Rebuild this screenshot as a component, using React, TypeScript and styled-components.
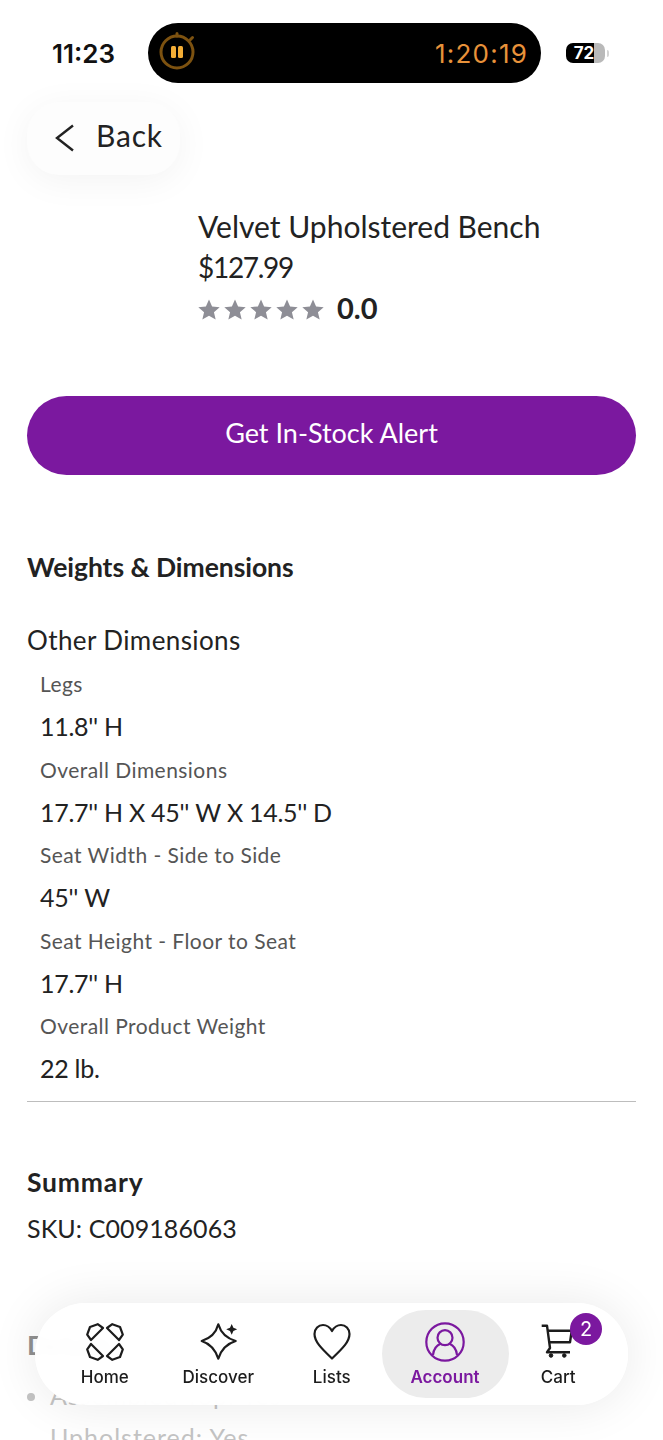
import React, { FC } from 'react';
import styled, { createGlobalStyle } from 'styled-components';

const GlobalStyle = createGlobalStyle`
  html, body {
    margin: 0;
    padding: 0;
    background: #fff;
  }
  * {
    box-sizing: border-box;
  }
`;

const Page = styled.div`
  position: relative;
  width: 663px;
  height: 1440px;
  overflow: hidden;
  background: #fff;
  font-family: Lato, 'Liberation Sans', sans-serif;
  color: #222;
`;

const StatusBar = styled.header`
  display: flex;
  align-items: center;
  height: 60px;
  margin-top: 23px;
  padding-left: 52px;
`;

const Clock = styled.span`
  width: 96px;
  font-family: Inter, sans-serif;
  font-size: 26px;
  font-weight: 600;
  color: #111;
`;

const Island = styled.div`
  display: flex;
  align-items: center;
  justify-content: space-between;
  width: 393px;
  height: 60px;
  padding: 0 13px 0 9px;
  border-radius: 30px;
  background: #000;
`;

const IslandTimer = styled.span`
  font-family: Inter, sans-serif;
  font-size: 26px;
  letter-spacing: 1.2px;
  color: #e8923a;
`;

const Battery = styled.div`
  display: flex;
  align-items: center;
  justify-content: center;
  width: 39px;
  height: 20px;
  margin-left: 25px;
  padding-right: 3px;
  border-radius: 7px;
  background: linear-gradient(90deg, #000 72%, #b9b9b9 72%);
  font-family: Inter, sans-serif;
  font-size: 17px;
  font-weight: 700;
  color: #fff;
`;

const BatteryCap = styled.div`
  width: 2px;
  height: 7px;
  margin-left: 2px;
  border-radius: 0 2px 2px 0;
  background: #d4d4d4;
`;

const BackButton = styled.button`
  display: flex;
  align-items: center;
  gap: 20px;
  width: 153px;
  height: 73px;
  margin: 19px 0 0 27px;
  padding: 0 0 2px 27px;
  border: none;
  border-radius: 32px;
  background: #fdfdfd;
  box-shadow: 0 6px 36px rgba(0, 0, 0, 0.05);
  font-family: inherit;
  font-size: 30px;
  letter-spacing: 0.8px;
  color: #222;
`;

const BackLabel = styled.span`
  margin-bottom: 6px;
`;

const ProductInfo = styled.section`
  display: flex;
  flex-direction: column;
  margin: 30px 0 0 198px;
`;

const ProductTitle = styled.h1`
  margin: 0;
  font-size: 30px;
  line-height: 42px;
  font-weight: 400;
  color: #222;
`;

const ProductPrice = styled.div`
  font-size: 28px;
  line-height: 40px;
  letter-spacing: -1.3px;
  color: #222;
`;

const RatingRow = styled.div`
  display: flex;
  align-items: center;
  height: 42px;
  margin-top: 1px;
`;

const Stars = styled.div`
  display: flex;
  gap: 4px;
  margin-right: 13px;
`;

const RatingValue = styled.span`
  padding-bottom: 3px;
  font-size: 29px;
  font-weight: 700;
  color: #222;
`;

const AlertButton = styled.button`
  display: block;
  width: 609px;
  height: 79px;
  margin: 66px 0 0 27px;
  padding: 0 0 7px;
  border: none;
  border-radius: 40px;
  background: #7b189f;
  font-family: inherit;
  font-size: 27px;
  color: #fff;
`;

const Content = styled.main`
  padding: 0 27px;
`;

const SectionTitle = styled.h2<{ $top: number; $tracking?: number }>`
  margin: ${(p) => p.$top}px 0 0;
  font-size: 26.5px;
  line-height: 36px;
  font-weight: 700;
  letter-spacing: ${(p) => p.$tracking ?? 0}px;
  color: #222;
`;

const SubTitle = styled.h3`
  margin: 37px 0 0;
  font-size: 26px;
  line-height: 36px;
  font-weight: 400;
  letter-spacing: 0.4px;
  color: #222;
`;

const DimensionList = styled.dl`
  margin: 6px 0 0;
  padding: 0 0 9px 13px;
  border-bottom: 1px solid #bdbdbd;
`;

const DimensionLabel = styled.dt`
  font-size: 21px;
  line-height: 40px;
  letter-spacing: 0.45px;
  color: #555;
`;

const DimensionValue = styled.dd`
  margin: 0;
  font-size: 25px;
  line-height: 45.6px;
  font-kerning: none;
  letter-spacing: -0.28px;
  color: #222;
`;

const SkuLine = styled.div`
  margin-top: 9px;
  font-size: 25px;
  line-height: 38px;
  letter-spacing: 0.1px;
  color: #222;
`;

const FadedSection = styled.section`
  margin-top: 80px;
`;

const FadedTitle = styled.h2`
  margin: 0;
  font-size: 27px;
  line-height: 36px;
  font-weight: 700;
  color: #8f8f8f;
`;

const FadedList = styled.ul`
  margin: 12px 0 0;
  padding: 0 0 0 23px;
  font-size: 25px;
  line-height: 40px;
  letter-spacing: 1px;
  color: #c4c4c4;
`;

const FadedItem = styled.li<{ $plain?: boolean }>`
  margin-top: ${(p) => (p.$plain ? '2px' : '0')};
  list-style: ${(p) => (p.$plain ? 'none' : 'disc')};
`;

const TabBar = styled.nav`
  position: absolute;
  left: 35px;
  top: 1303px;
  display: flex;
  align-items: center;
  width: 593px;
  height: 102px;
  padding: 0 11px 0 13px;
  border-radius: 51px;
  background: rgba(255, 255, 255, 0.97);
  backdrop-filter: blur(4px);
  box-shadow: 0 0 50px rgba(0, 0, 0, 0.09);
`;

const Tab = styled.a<{ $active?: boolean }>`
  position: relative;
  display: flex;
  flex-direction: column;
  align-items: center;
  justify-content: flex-end;
  flex: 0 0 ${(p) => (p.$active ? '127px' : '113.5px')};
  height: 88px;
  margin: 0 ${(p) => (p.$active ? '-7px' : '0')};
  padding-bottom: 11px;
  border-radius: 44px;
  background: ${(p) => (p.$active ? '#ececec' : 'transparent')};
  font-family: Inter, sans-serif;
  font-size: 17px;
  font-weight: ${(p) => (p.$active ? 600 : 500)};
  color: ${(p) => (p.$active ? '#7b189f' : '#1c1c1c')};
`;

const TabIcon = styled.svg`
  display: block;
  width: 40px;
  height: 40px;
  margin-bottom: 5px;
`;

const Badge = styled.span`
  position: absolute;
  top: 3px;
  right: 13px;
  display: flex;
  align-items: center;
  justify-content: center;
  width: 32px;
  height: 32px;
  border-radius: 50%;
  background: #7b189f;
  font-size: 20px;
  font-weight: 400;
  color: #fff;
`;

const Star: FC = () => (
  <svg width="22" height="21" viewBox="0 0 24 23">
    <path d="M12 0.5l3.4 7.6 8.3.8-6.3 5.5 1.9 8.1L12 18.3l-7.3 4.2 1.9-8.1L.3 8.9l8.3-.8z" fill="#8e8e96" />
  </svg>
);

const dimensions = [
  ['Legs', "11.8'' H"],
  ['Overall Dimensions', "17.7'' H X 45'' W X 14.5'' D"],
  ['Seat Width - Side to Side', "45'' W"],
  ['Seat Height - Floor to Seat', "17.7'' H"],
  ['Overall Product Weight', '22 lb.'],
];

const petal = 'M6 18L2.200 12.700 5 5l7.700-2.800L18 6z';

const App: FC = () => {
  return (
    <Page>
      <GlobalStyle />
      <StatusBar>
        <Clock>11:23</Clock>
        <Island>
          <svg width="40" height="44" viewBox="0 0 40 44">
            <circle cx="20" cy="21" r="16" fill="none" stroke="#7d5210" strokeWidth="3" />
            <path d="M20 2.500V5M35.500 6.500l-2 2" stroke="#7d5210" strokeWidth="3" strokeLinecap="round" />
            <rect x="14" y="15" width="5" height="12" rx="1.500" fill="#f3ad36" />
            <rect x="21" y="15" width="5" height="12" rx="1.500" fill="#f3ad36" />
          </svg>
          <IslandTimer>1:20:19</IslandTimer>
        </Island>
        <Battery>72</Battery>
        <BatteryCap />
      </StatusBar>

      <BackButton>
        <svg width="22" height="28" viewBox="0 0 22 28">
          <path d="M19 1.500L3 14l16 12.500" fill="none" stroke="#222" strokeWidth="2.400" />
        </svg>
        <BackLabel>Back</BackLabel>
      </BackButton>

      <ProductInfo>
        <ProductTitle>Velvet Upholstered Bench</ProductTitle>
        <ProductPrice>$127.99</ProductPrice>
        <RatingRow>
          <Stars>
            <Star />
            <Star />
            <Star />
            <Star />
            <Star />
          </Stars>
          <RatingValue>0.0</RatingValue>
        </RatingRow>
      </ProductInfo>

      <AlertButton>Get In-Stock Alert</AlertButton>

      <Content>
        <SectionTitle $top={74} $tracking={-0.05}>Weights &amp; Dimensions</SectionTitle>
        <SubTitle>Other Dimensions</SubTitle>
        <DimensionList>
          {dimensions.map(([label, value]) => (
            <React.Fragment key={label}>
              <DimensionLabel>{label}</DimensionLabel>
              <DimensionValue>{value}</DimensionValue>
            </React.Fragment>
          ))}
        </DimensionList>
        <SectionTitle $top={62} $tracking={0.8}>Summary</SectionTitle>
        <SkuLine>SKU: C009186063</SkuLine>
        <FadedSection>
          <FadedTitle>Details</FadedTitle>
          <FadedList>
            <FadedItem>Assembled Top: Yes</FadedItem>
            <FadedItem $plain>Upholstered: Yes</FadedItem>
          </FadedList>
        </FadedSection>
      </Content>

      <TabBar>
        <Tab>
          <TabIcon viewBox="0 0 40 40" fill="none" stroke="#1c1c1c" strokeWidth="2.200" strokeLinejoin="round">
            <path d={petal} />
            <path d={petal} transform="rotate(90 20 20)" />
            <path d={petal} transform="rotate(180 20 20)" />
            <path d={petal} transform="rotate(270 20 20)" />
          </TabIcon>
          Home
        </Tab>
        <Tab>
          <TabIcon viewBox="0 0 40 40" fill="none" stroke="#1c1c1c" strokeWidth="2.200" strokeLinejoin="round">
            <path d="M20.300 2.300Q24 15 37.700 19 24.500 23 20.300 36.700 16 23 3.700 19 17 15 20.300 2.300z" />
            <path d="M33.700 2l1.700 3.700 3.800 1.600-3.800 1.700-1.700 3.800-1.700-3.800-3.800-1.700 3.800-1.600z" fill="#1c1c1c" stroke="none" />
          </TabIcon>
          Discover
        </Tab>
        <Tab>
          <TabIcon viewBox="0 0 40 40" fill="none" stroke="#1c1c1c" strokeWidth="2.200" strokeLinejoin="round">
            <path d="M20 36.500C9 26 2.500 19.500 2.500 12 2.500 6.500 6.500 3 11 3c3.800 0 7 2.500 9 6 2-3.500 5.200-6 9-6 4.500 0 8.500 3.500 8.500 9 0 7.500-6.500 14-17.500 24.500z" />
          </TabIcon>
          Lists
        </Tab>
        <Tab $active>
          <TabIcon viewBox="0 0 40 40" fill="none" stroke="#7b189f" strokeWidth="2.200">
            <circle cx="20" cy="20" r="18.700" />
            <circle cx="20" cy="15.700" r="7.500" />
            <path d="M8 33c.5-6 3-9.500 8-11.500M32 33c-.5-6-3-9.500-8-11.500" />
          </TabIcon>
          Account
        </Tab>
        <Tab>
          <TabIcon viewBox="0 0 40 40" fill="none" stroke="#1c1c1c" strokeWidth="2.400" strokeLinejoin="round">
            <path d="M3.700 3.700H9L12 26l-3 4.300h23" />
            <path d="M9.700 8.700h24L32 20.300H11.500" />
            <circle cx="13" cy="33.500" r="1.800" fill="#1c1c1c" strokeWidth="1" />
            <circle cx="26.300" cy="33.500" r="1.800" fill="#1c1c1c" strokeWidth="1" />
          </TabIcon>
          Cart
          <Badge>2</Badge>
        </Tab>
      </TabBar>
    </Page>
  );
};

export default App;
